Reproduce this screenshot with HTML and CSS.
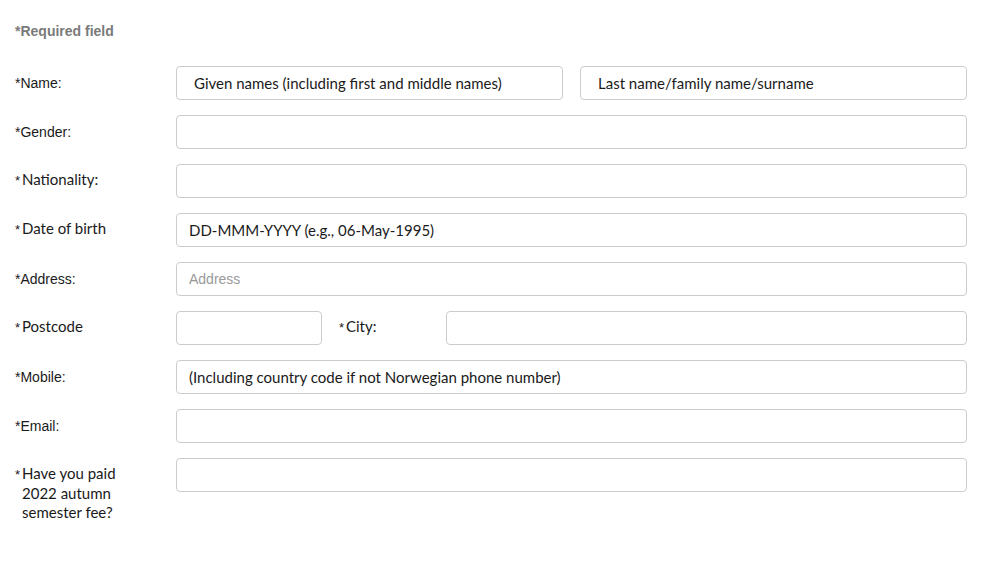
FILE: index.html
```html
<!DOCTYPE html>
<html lang="en">
<head>
<meta charset="utf-8">
<title>Registration form</title>
<link rel="stylesheet" href="styles.css">
</head>
<body>
<form class="form">
  <div class="required">*Required field</div>

  <div class="row">
    <label class="lbl lbl-a">*Name:</label>
    <div class="controls">
      <input class="field field-c pad-wide" type="text" value="Given names (including first and middle names)">
      <input class="field field-c pad-wide" type="text" value="Last name/family name/surname">
    </div>
  </div>

  <div class="row">
    <label class="lbl lbl-a">*Gender:</label>
    <div class="controls"><input class="field" type="text"></div>
  </div>

  <div class="row">
    <label class="lbl lbl-c"><span class="ast">*</span>Nationality:</label>
    <div class="controls"><input class="field" type="text"></div>
  </div>

  <div class="row">
    <label class="lbl lbl-c"><span class="ast">*</span>Date of birth</label>
    <div class="controls"><input class="field field-c" type="text" value="DD-MMM-YYYY (e.g., 06-May-1995)"></div>
  </div>

  <div class="row">
    <label class="lbl lbl-a">*Address:</label>
    <div class="controls"><input class="field field-a" type="text" placeholder="Address"></div>
  </div>

  <div class="row">
    <label class="lbl lbl-c"><span class="ast">*</span>Postcode</label>
    <div class="controls">
      <input class="field postcode" type="text">
      <label class="lbl lbl-c city-lbl"><span class="ast">*</span>City:</label>
      <input class="field" type="text">
    </div>
  </div>

  <div class="row">
    <label class="lbl lbl-a">*Mobile:</label>
    <div class="controls"><input class="field field-c" type="text" value="(Including country code if not Norwegian phone number)"></div>
  </div>

  <div class="row">
    <label class="lbl lbl-a">*Email:</label>
    <div class="controls"><input class="field" type="text"></div>
  </div>

  <div class="row">
    <label class="lbl lbl-c hang"><span class="ast">*</span>Have you paid 2022 autumn semester fee?</label>
    <div class="controls"><input class="field" type="text"></div>
  </div>
</form>
</body>
</html>
```

FILE: styles.css
```css
* { box-sizing: border-box; }

body {
  margin: 0;
  background: #fff;
  color: #222;
  font-family: "Liberation Sans", Arial, sans-serif;
}

.form {
  padding: 22px 15px 0 15px;
  width: 982px;
}

.required {
  font-size: 14px;
  line-height: 18px;
  font-weight: bold;
  color: #7a7a7a;
  margin-bottom: 26px;
}

.row {
  display: grid;
  grid-template-columns: 161px 791px;
  margin-bottom: 15px;
  align-items: start;
}

.controls {
  display: flex;
  gap: 17px;
  align-items: start;
}

.lbl {
  display: block;
  padding-top: 8px;
  line-height: 19px;
  color: #1a1a1a;
}

.lbl-a {
  font-family: "Liberation Sans", Arial, sans-serif;
  font-size: 14px;
}

.lbl-c {
  font-family: Lato, "Open Sans", sans-serif;
  font-size: 15px;
  padding-top: 6px;
}

.ast {
  display: inline-block;
  width: 7px;
  text-indent: 0;
  font-family: "Liberation Sans", Arial, sans-serif;
  font-size: 13px;
}

.hang {
  padding-left: 7px;
  text-indent: -7px;
  width: 120px;
}

.field {
  flex: 1 1 0;
  min-width: 0;
  height: 34px;
  border: 1px solid #cccccc;
  border-radius: 4px;
  padding: 0 12px;
  background: #fff;
  font-family: Lato, "Open Sans", sans-serif;
  font-size: 15px;
  color: #1a1a1a;
  outline: none;
}

.field-c {
  font-family: Lato, "Open Sans", sans-serif;
  font-size: 15px;
}

.pad-wide {
  padding-left: 17px;
}

.field-a {
  font-family: "Liberation Sans", Arial, sans-serif;
  font-size: 14px;
}

.field::placeholder {
  color: #999;
}

.postcode {
  flex: 0 0 146px;
}

.city-lbl {
  flex: 0 0 90px;
}
```
